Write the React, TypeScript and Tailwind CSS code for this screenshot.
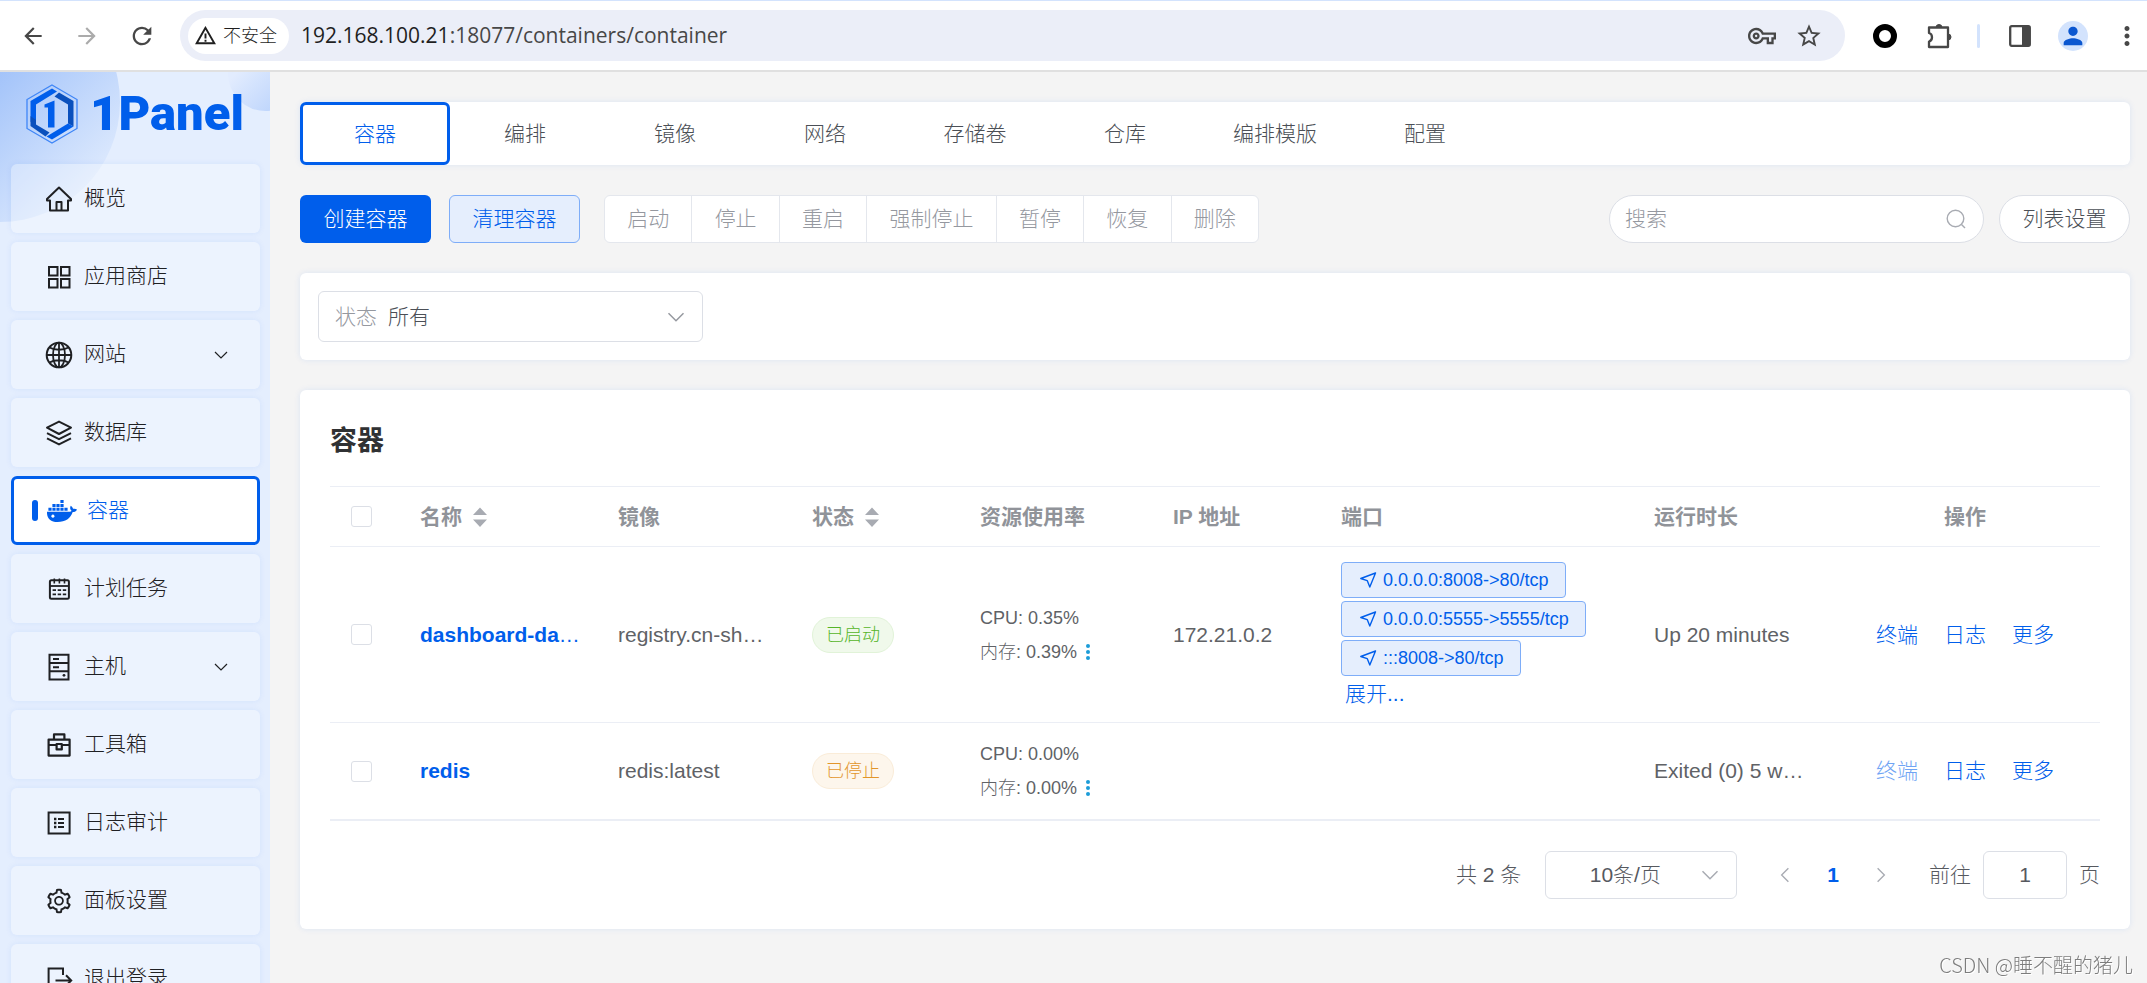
import type { ReactNode } from "react";
import { AiOutlineSetting } from "react-icons/ai";
import {
  MdArrowBack,
  MdArrowForward,
  MdMoreVert,
  MdOutlineVpnKey,
  MdPerson,
  MdRefresh,
  MdStarOutline,
} from "react-icons/md";

const cjk = "font-['Liberation_Sans','Noto_Sans_CJK_SC',sans-serif]";

function Line({ children, width = 2 }: { children: ReactNode; width?: number }) {
  return (
    <svg viewBox="0 0 28 28" className="size-7" fill="none" stroke="currentColor" strokeWidth={width} aria-hidden="true">
      {children}
    </svg>
  );
}

const icons: Record<string, ReactNode> = {
  home: (
    <Line>
      <path d="M14 2.5 2 14v1.5h3V25.5h18V15.5h3V14L14 2.5ZM11.5 25.5V17h5v8.5" strokeLinejoin="round" />
    </Line>
  ),
  apps: (
    <Line>
      <path d="M4 4h8.5v8.5H4zM16 4h8.5v8.5H16zM4 16h8.5v8.5H4zM16 16h8.5v8.5H16z" />
    </Line>
  ),
  globe: (
    <Line>
      <circle cx="14" cy="14" r="12.3" />
      <path d="M14 2v24M2 14h24M4.5 6.500c5 3 14 3 19 0M4.500 21.500c5-3 14-3 19 0" strokeWidth="1.8" />
      <ellipse cx="14" cy="14" rx="6" ry="12.3" strokeWidth="1.8" />
    </Line>
  ),
  layers: (
    <Line>
      <path d="M14 2.600 26 8.600 14 15 2 8.600 14 2.600ZM2 14.200l12 6 12-6M2 19.400l12 6 12-6" strokeLinejoin="round" />
    </Line>
  ),
  calendar: (
    <Line>
      <rect x="4.9" y="5.2" width="19" height="18.6" rx="1.5" />
      <path d="M5 11h19" strokeWidth="1.8" />
      <path d="M9.300 3.400v5M14.400 3.400v5M19.500 3.400v5" strokeWidth="1.6" />
      <path d="M7.600 15.200h3.400M12.700 15.200h3.400M17.800 15.200h3.400M7.600 19.300h3.400M12.700 19.300h3.400M17.800 19.300h3.400" strokeWidth="1.8" />
    </Line>
  ),
  server: (
    <Line>
      <path d="M4.500 1.800h19v24.600h-19zM4.500 10h19M4.500 18.200h19M8 6h6M8 14.200h6" />
      <circle cx="19" cy="22.3" r="1.4" fill="currentColor" stroke="none" />
    </Line>
  ),
  toolbox: (
    <Line width={2.2}>
      <path d="M9 7.800V3.400h10.400v4.400M3.600 24.600h21V8.600h-21zM3.600 14h8M17 14h7.600M11.600 13h5.200v5.400h-5.200z" strokeLinejoin="round" />
    </Line>
  ),
  log: (
    <Line>
      <path d="M3.600 3.600h21v21h-21zM13 10h6M13 14h6M13 18h6" />
      <path d="M9 10h2.400M9 14h2.400M9 18h2.400" strokeWidth="2.4" />
    </Line>
  ),
  gear: <AiOutlineSetting className="size-7" />,
  exit: (
    <Line>
      <path d="M18 10V3.600H3.600v21H18V22M10.500 15.500H26M21 10.300l5.200 5.200-5.200 5.200" />
    </Line>
  ),
};

function Whale() {
  return (
    <svg viewBox="0 0 30 22" className="h-[22px] w-[30px]" fill="currentColor" aria-hidden="true">
      <path d="M13.400 0h3.200v3h-3.200zM5.400 3.900h3.200v3H5.400zM9.400 3.900h3.200v3H9.400zM13.400 3.900h3.200v3h-3.200zM1.400 7.800h3.200v3H1.400zM5.400 7.800h3.200v3H5.400zM9.400 7.800h3.200v3H9.400zM13.400 7.800h3.200v3h-3.200zM17.400 7.800h3.200v3h-3.200z" />
      <path
        fillRule="evenodd"
        d="M0 11.800h22.200c1.300 0 2-.4 2.300-1-1.600-1.500-1.700-3.400-.7-5 1.300.8 2 1.900 2.200 3 1.500-.3 3-.1 4 .6-.8 1.800-2.300 2.600-4.300 2.600C23.500 18.500 18.500 22 10.500 22 3.500 22-.3 18.300 0 11.800ZM5.900 14.600a1.600 1.600 0 1 0 .01 0Z"
      />
    </svg>
  );
}

function Chevron({ className }: { className: string }) {
  return (
    <svg viewBox="0 0 16 16" className={className} fill="none" stroke="currentColor" strokeWidth="1.2" aria-hidden="true">
      <path d="m2 5 6 6 6-6" />
    </svg>
  );
}

type Item = { icon: string; label: string; sub?: boolean; active?: boolean };

const menu: Item[] = [
  { icon: "home", label: "概览" },
  { icon: "apps", label: "应用商店" },
  { icon: "globe", label: "网站", sub: true },
  { icon: "layers", label: "数据库" },
  { icon: "whale", label: "容器", active: true },
  { icon: "calendar", label: "计划任务" },
  { icon: "server", label: "主机", sub: true },
  { icon: "toolbox", label: "工具箱" },
  { icon: "log", label: "日志审计" },
  { icon: "gear", label: "面板设置" },
  { icon: "exit", label: "退出登录" },
];

function Browser() {
  return (
    <header className="flex h-[72px] shrink-0 items-center border-t border-b-2 border-t-[#d3e3fd] border-b-[#e0e0e0] bg-white pr-[5px] text-[#474747]">
      <div className="flex items-center gap-7 pl-5">
        <button aria-label="后退"><MdArrowBack className="size-[26px]" /></button>
        <button aria-label="前进" className="text-[#ababab]"><MdArrowForward className="size-[26px]" /></button>
        <button aria-label="刷新"><MdRefresh className="size-7" /></button>
      </div>
      <div className="ml-6 flex h-[51px] flex-1 items-center rounded-full bg-[#ebeef8] pr-[22px] pl-2">
        <button className="flex h-9 items-center gap-1.5 rounded-full bg-white pr-3 pl-1.5 text-lg text-[#1f1f1f]">
          <svg viewBox="0 0 24 24" className="size-[23px]" fill="none" stroke="currentColor" strokeWidth="2" aria-hidden="true">
            <path d="M12 4 2.800 20h18.400L12 4ZM12 10v5M12 16.500v2" />
          </svg>
          不安全
        </button>
        <p className="ml-3 flex-1 font-['Open_Sans',sans-serif] text-[21px] font-normal">
          <span className="text-[#1f1f1f]">192.168.100.21</span>:18077/containers/container
        </p>
        <button aria-label="密码" className="mr-[19px]"><MdOutlineVpnKey className="size-7" /></button>
        <button aria-label="收藏"><MdStarOutline className="size-7" /></button>
      </div>
      <button aria-label="扩展程序 O" className="ml-7 size-6 rounded-full border-[6px] border-black" />
      <button aria-label="扩展程序" className="ml-7">
        <svg viewBox="0 0 28 28" className="size-7" fill="none" stroke="currentColor" strokeWidth="2.300" aria-hidden="true">
          <path d="M4 5.500h19v19.500H4v-5.500c4-1 4-7.500 0-8.500V5.500Z" strokeLinejoin="round" />
          <path d="M11 5.500a3 3 0 0 1 6 0ZM23 12a3 3 0 0 1 0 6Z" fill="currentColor" strokeWidth="1" />
        </svg>
      </button>
      <div className="ml-6 h-6 w-[3px] rounded-full bg-[#d3e3fd]" />
      <button aria-label="侧边栏" className="ml-7">
        <svg viewBox="0 0 24 24" className="size-6" aria-hidden="true">
          <rect x="2.200" y="2.200" width="19.600" height="19.600" rx="1.500" fill="none" stroke="currentColor" strokeWidth="2.300" />
          <path d="M14 2h8v20h-8z" fill="currentColor" />
        </svg>
      </button>
      <button aria-label="个人资料" className="ml-[26px] flex size-[30px] items-center justify-center rounded-full bg-[#d3e3fd] text-[#0b57d0]">
        <MdPerson className="size-7" />
      </button>
      <button aria-label="菜单" className="ml-6"><MdMoreVert className="size-[30px]" /></button>
    </header>
  );
}

function Sidebar() {
  return (
    <aside className="relative w-[270px] shrink-0 overflow-hidden bg-[#e4eefe]">
      <div className="absolute -top-[90px] -left-[120px] size-60 rounded-full bg-linear-to-br from-[#9ec0f9] from-40% to-[#dbe8fd] to-85%" />
      <div className="absolute -top-[36px] left-[228px] size-[75px] rounded-full bg-linear-to-br from-[#e2ecfe] from-30% to-[#b0ccfb]" />
      <div className="relative pr-2.5 pl-[11px]">
        <div className="flex h-[92px] items-center pb-2 pl-[15px]">
          <svg viewBox="0 0 52 60" className="h-[60px] w-[52px] shrink-0" aria-hidden="true">
            <path d="M26 1 51 15.500v29L26 59 1 44.500v-29L26 1Z" fill="none" stroke="#3f86f7" strokeWidth="1.300" />
            <path d="M26 4.500 31 7.500 10 20.500V41l-5.500-3.200V17L26 4.500Z" fill="#005eeb" />
            <path d="M33 8.500 47.500 17v25.500L42 39.500V20.500L28.500 12.500 33 8.500Z" fill="#0a50bd" />
            <path d="M4.500 42V32l5.500 4v4.500l13.500 8-4 4L4.500 42Z" fill="#0a50bd" />
            <path d="M42 39.500 47.500 42.500 26 55.500l-5.500-3L42 39.500Z" fill="#005eeb" />
            <path d="M18.500 20.500 28.500 16.500v27h-6.500v-20h-3.500v-3Z" fill="#005eeb" />
          </svg>
          <span className="ml-3 font-['Roboto',sans-serif] text-[49px] leading-[60px] font-black text-[#005eeb]">1Panel</span>
        </div>
        <nav className="flex flex-col gap-[9px]">
          {menu.map((m) =>
            m.active ? (
              <a key={m.label} href="#" className="flex h-[69px] items-center rounded-md border-3 border-[#005eeb] bg-white pl-[18px] text-[21px] text-[#005eeb]">
                <span className="h-[21px] w-1.5 rounded-full bg-[#005eeb]" />
                <span className="ml-[9px]"><Whale /></span>
                <span className="ml-[10px] pb-0.5">{m.label}</span>
              </a>
            ) : (
              <a key={m.label} href="#" className="flex h-[69px] items-center rounded-md bg-white/30 pr-[31px] pl-[34px] text-[21px] text-[#1f2023] shadow-[0_0_6px_rgba(0,94,235,0.08)]">
                {icons[m.icon]}
                <span className="ml-[11px] flex-1 pb-0.5">{m.label}</span>
                {m.sub && <Chevron className="size-4" />}
              </a>
            ),
          )}
        </nav>
      </div>
    </aside>
  );
}

const tabs = ["容器", "编排", "镜像", "网络", "存储卷", "仓库", "编排模版", "配置"];
const actions = ["启动", "停止", "重启", "强制停止", "暂停", "恢复", "删除"];
const card = "rounded-md bg-white shadow-[0_0_6px_rgba(0,94,235,0.1)]";

function Tabs() {
  return (
    <div className={`flex ${card}`}>
      {tabs.map((t, i) => (
        <button
          key={t}
          className={
            i === 0
              ? "h-[63px] w-[150px] rounded-md border-3 border-[#005eeb] text-[21px] text-[#005eeb]"
              : "h-[63px] w-[150px] text-[21px] text-[#4b4f56]"
          }
        >
          {t}
        </button>
      ))}
    </div>
  );
}

function Toolbar() {
  return (
    <div className="flex h-12 text-[21px]">
      <button className="w-[131px] rounded-md bg-[#005eeb] text-white">创建容器</button>
      <button className="ml-[18px] w-[131px] rounded-md border border-[#7eadf8] bg-[#e5eefd] text-[#005eeb]">清理容器</button>
      <div className="ml-6 flex w-[655px] divide-x divide-[#e4e7ed] rounded-md border border-[#e4e7ed] bg-white">
        {actions.map((a) => (
          <button key={a} disabled className="flex-auto px-[22px] whitespace-nowrap text-[#95989f]">{a}</button>
        ))}
      </div>
      <label className="ml-auto flex w-[375px] items-center rounded-full border border-[#dcdfe6] bg-white pr-[17px] pl-[15px]">
        <input aria-label="搜索" placeholder="搜索" className="min-w-0 flex-1 outline-none placeholder:text-[#95989f]" />
        <svg viewBox="0 0 20 20" className="size-5 text-[#a8abb2]" fill="none" stroke="currentColor" strokeWidth="1.400" aria-hidden="true">
          <circle cx="9.500" cy="9.500" r="8.300" />
          <path d="m15.500 15.500 3.500 3.500" />
        </svg>
      </label>
      <button className="ml-[15px] w-[131px] rounded-full border border-[#dcdfe6] bg-white text-[#4b4f56]">列表设置</button>
    </div>
  );
}

function Filter() {
  return (
    <div className={`p-[18px] ${card}`}>
      <label className="relative flex h-[51px] w-[385px] items-center rounded-md border border-[#dcdfe6] pl-4 text-[21px] text-[#95989f]">
        状态
        <select className="ml-[11px] flex-1 appearance-none text-[#4b4f56] outline-none">
          <option>所有</option>
        </select>
        <Chevron className="pointer-events-none absolute right-4 size-5" />
      </label>
    </div>
  );
}

type Row = {
  name: string;
  clipped?: boolean;
  image: string;
  state: string;
  up: boolean;
  cpu: string;
  mem: string;
  ip: string;
  ports: string[];
  time: string;
};

const rows: Row[] = [
  {
    name: "dashboard-da",
    clipped: true,
    image: "registry.cn-sh…",
    state: "已启动",
    up: true,
    cpu: "0.35%",
    mem: "0.39%",
    ip: "172.21.0.2",
    ports: ["0.0.0.0:8008->80/tcp", "0.0.0.0:5555->5555/tcp", ":::8008->80/tcp"],
    time: "Up 20 minutes",
  },
  {
    name: "redis",
    image: "redis:latest",
    state: "已停止",
    up: false,
    cpu: "0.00%",
    mem: "0.00%",
    ip: "",
    ports: [],
    time: "Exited (0) 5 w…",
  },
];

function Sort() {
  return (
    <svg viewBox="0 0 14 20" className="ml-[11px] inline h-5 w-3.5 align-[-3px]" fill="#a8abb2" aria-hidden="true">
      <path d="M7 0.500 14 8H0zM0 12.500h14L7 20z" />
    </svg>
  );
}

function Check({ label }: { label: string }) {
  return (
    <input
      type="checkbox"
      aria-label={label}
      className="ml-[3px] block size-[21px] appearance-none rounded-[3px] border border-[#dcdfe6] bg-white"
    />
  );
}

function Containers() {
  return (
    <section className={`p-[30px] ${card}`}>
      <h2 className="mb-6 text-[27px] leading-[42px] font-bold text-[#303133]">容器</h2>
      <table className="w-full table-fixed border-separate border-spacing-0 text-left text-[21px] text-[#606266]">
        <colgroup>
          <col className="w-[72px]" />
          <col className="w-[198px]" />
          <col className="w-[194px]" />
          <col className="w-[168px]" />
          <col className="w-[193px]" />
          <col className="w-[168px]" />
          <col />
          <col className="w-[194px]" />
          <col className="w-[270px]" />
        </colgroup>
        <thead className="text-[#909399] [&_th]:h-[61px] [&_th]:border-y [&_th]:border-[#ebeef5] [&_th]:px-[18px] [&_th]:font-bold">
          <tr>
            <th><Check label="全选" /></th>
            <th>名称<Sort /></th>
            <th>镜像</th>
            <th>状态<Sort /></th>
            <th>资源使用率</th>
            <th>IP 地址</th>
            <th>端口</th>
            <th>运行时长</th>
            <th className="text-center">操作</th>
          </tr>
        </thead>
        <tbody className="[&_td]:border-b [&_td]:border-[#ebeef5] [&_td]:px-[18px]">
          {rows.map((r) => (
            <tr key={r.name} className={r.up ? "h-[176px]" : "h-[98px] [&_td]:border-b-2"}>
              <td><Check label={r.name} /></td>
              <td className="whitespace-nowrap">
                <a href="#" className="text-[#005eeb]"><span className="font-bold">{r.name}</span>{r.clipped && "…"}</a>
              </td>
              <td className="whitespace-nowrap">{r.image}</td>
              <td>
                <span
                  className={
                    r.up
                      ? "inline-flex h-9 items-center rounded-full border border-[#e1f3d8] bg-[#f0f9eb] px-[13px] align-middle text-lg text-[#55b528]"
                      : "inline-flex h-9 items-center rounded-full border border-[#faecd8] bg-[#fdf6ec] px-[13px] align-middle text-lg text-[#e2952a]"
                  }
                >
                  {r.state}
                </span>
              </td>
              <td className="text-lg leading-[34px] whitespace-nowrap">
                <div>CPU: {r.cpu}</div>
                <div className="flex items-center">
                  内存: {r.mem}
                  <svg viewBox="0 0 6 18" className="ml-2 h-[18px] w-1.5" fill="#1c9cd8" aria-hidden="true">
                    <circle cx="3" cy="3" r="2" />
                    <circle cx="3" cy="9" r="2" />
                    <circle cx="3" cy="15" r="2" />
                  </svg>
                </div>
              </td>
              <td>{r.ip}</td>
              <td>
                {r.ports.length > 0 && (
                  <div className="flex flex-col items-start gap-[3px]">
                    {r.ports.map((p) => (
                      <button key={p} className="flex h-9 items-center gap-1.5 rounded border border-[#7eadf8] bg-[#e5eefd] pr-4 pl-[17px] text-lg whitespace-nowrap text-[#005eeb]">
                        <svg viewBox="0 0 18 18" className="size-[18px]" fill="none" stroke="currentColor" strokeWidth="1.400" strokeLinejoin="round" aria-hidden="true">
                          <path d="M16.500 2 1.800 7.500 8.200 9.600 10.800 16 16.500 2Z" />
                        </svg>
                        {p}
                      </button>
                    ))}
                    <button className="ml-1 h-7 leading-[30px] text-[#005eeb]">展开...</button>
                  </div>
                )}
              </td>
              <td className="whitespace-nowrap">{r.time}</td>
              <td>
                <div className="flex justify-center gap-[26px] text-[#005eeb]">
                  <button disabled={!r.up} className="disabled:text-[#6fa4f4]">终端</button>
                  <button>日志</button>
                  <button>更多</button>
                </div>
              </td>
            </tr>
          ))}
        </tbody>
      </table>
      <div className="mt-[30px] flex h-12 items-center justify-end text-[21px] text-[#56595f]">
        <span>共 2 条</span>
        <label className="relative ml-6 flex h-12 w-48 items-center rounded-md border border-[#dcdfe6]">
          <select aria-label="每页条数" className="h-full w-full appearance-none pr-8 text-center outline-none">
            <option>10条/页</option>
          </select>
          <Chevron className="pointer-events-none absolute right-4 size-5 text-[#a8abb2]" />
        </label>
        <button aria-label="上一页" disabled className="ml-[39px] text-[#a8abb2]"><Chevron className="size-[18px] rotate-90" /></button>
        <button className="mx-[33px] font-bold text-[#005eeb]">1</button>
        <button aria-label="下一页" disabled className="text-[#a8abb2]"><Chevron className="size-[18px] -rotate-90" /></button>
        <label className="ml-[39px] flex items-center gap-3">
          前往
          <input defaultValue="1" className="h-12 w-[84px] rounded-md border border-[#dcdfe6] text-center outline-none" />
          页
        </label>
      </div>
    </section>
  );
}

export default function App() {
  return (
    <div className={`flex h-screen flex-col overflow-hidden bg-[#f4f4f4] font-light ${cjk}`}>
      <Browser />
      <div className="flex min-h-0 flex-1">
        <Sidebar />
        <main className="flex min-w-0 flex-1 flex-col gap-[30px] pt-[30px] pr-[17px] pl-[30px]">
          <Tabs />
          <Toolbar />
          <Filter />
          <Containers />
        </main>
      </div>
      <p className="fixed right-3.5 bottom-1 font-['Noto_Sans_CJK_SC',sans-serif] text-xl text-[#7d7d7d] [text-shadow:1px_1px_0_#ffffff]">
        CSDN @睡不醒的猪儿
      </p>
    </div>
  );
}
